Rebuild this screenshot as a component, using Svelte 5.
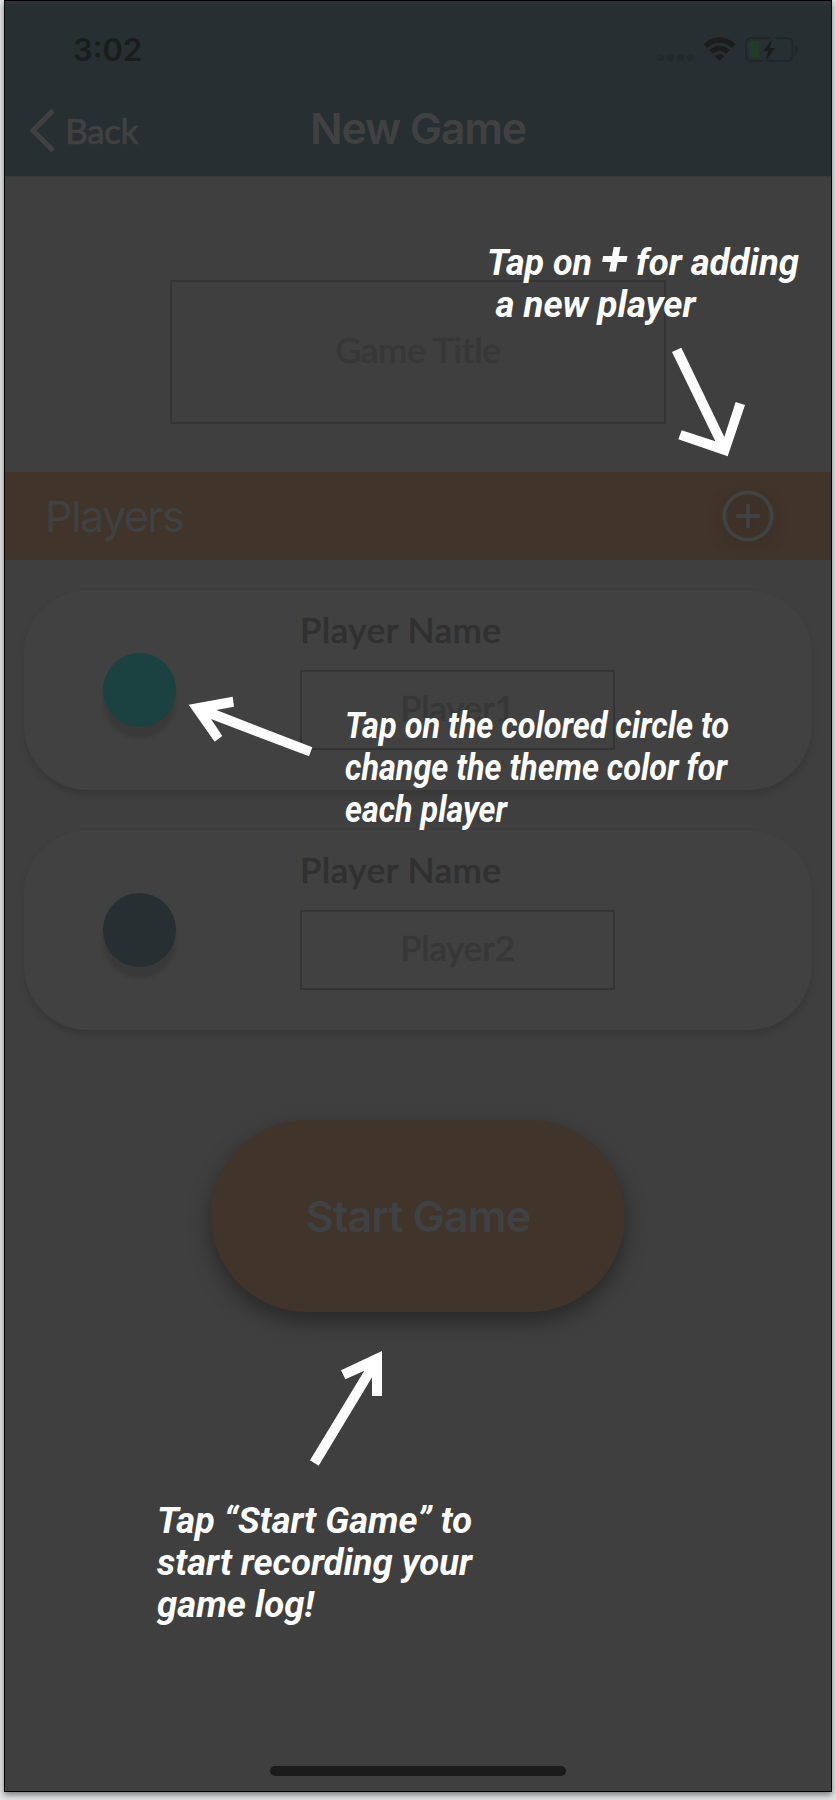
<script>
  const players = [
    { color: '#1b4141', placeholder: 'Player1' },
    { color: '#272f32', placeholder: 'Player2' }
  ];
  const notes = [
    { x: 487, y: 275, w: 105, text: 'Tap on' },
    { x: 636, y: 275, w: 163, text: 'for adding' },
    { x: 495.5, y: 317, w: 200, text: 'a new player' },
    { x: 345, y: 738, w: 384, text: 'Tap on the colored circle to' },
    { x: 345, y: 780, w: 382, text: 'change the theme color for' },
    { x: 345, y: 822, w: 162, text: 'each player' },
    { x: 157, y: 1532.7, w: 315, text: 'Tap “Start Game” to' },
    { x: 157, y: 1574.7, w: 315, text: 'start recording your' },
    { x: 157, y: 1616.7, w: 157, text: 'game log!' }
  ];
</script>

<div class="stage">
  <main class="phone">
    <header>
      <div class="status">
        <span class="time">3:02</span>
        <svg class="indicators" width="144" height="30" viewBox="656 34 144 30">
          <g fill="#24292c">
            <circle cx="660.5" cy="57.5" r="3.6" /><circle cx="670.5" cy="57.5" r="3.6" />
            <circle cx="680.5" cy="57.5" r="3.6" /><circle cx="690.5" cy="57.5" r="3.6" />
          </g>
          <g fill="#1b1c1c">
            <path d="M703.5 44.2Q719.5 30.2 735.5 44.2L732 48Q719.5 37.4 707 48Z" />
            <path d="M709.2 50Q719.5 41.4 729.8 50L726.3 53.5Q719.5 48 712.7 53.5Z" />
            <path d="M714.8 56.2Q719.5 52.2 724.2 56.2L719.5 61Z" />
            <path d="M772.2 39L763 51.2h5.4L765.5 61L775 48h-5.2Z" />
          </g>
          <path d="M771 38H752q-6 0-6 6v11q0 6 6 6h11M774.5 38H787q5.5 0 5.500 6v11q0 6-5.500 6H767" fill="none" stroke="#22272a" stroke-width="1.8" />
          <path d="M795 45.500q3 1 3 4t-3 4Z" fill="#22272a" />
          <path d="M751 41h8.500v17H751q-2 0-2-2V43q0-2 2-2Z" fill="#223a29" />
        </svg>
      </div>
      <div class="nav">
        <span class="back">
          <svg width="25" height="43" viewBox="0 0 25 43"><path d="M21.500 3L3 21.500L21.500 40" fill="none" stroke="#414141" stroke-width="5" stroke-linecap="round" stroke-linejoin="miter" /></svg>
          <span class="futura back-label">Back</span>
        </span>
        <h1>New Game</h1>
      </div>
    </header>

    <section class="title-area">
      <div class="field title-field"><span class="futura">Game Title</span></div>
    </section>

    <div class="players-bar">
      <h2>Players</h2>
      <svg class="add" width="52" height="52" viewBox="0 0 52 52">
        <circle cx="26" cy="26" r="23.700" />
        <path d="M26 15.500v21M15.500 26h21" />
      </svg>
    </div>

    <section class="cards">
      {#each players as p}
        <article class="card">
          <div class="swatch" style="background: {p.color}"></div>
          <div class="info">
            <div class="label"><span class="futura">Player Name</span></div>
            <div class="field name-field"><span class="futura">{p.placeholder}</span></div>
          </div>
        </article>
      {/each}
    </section>

    <div class="start">Start Game</div>
    <div class="home"></div>
  </main>

  <svg class="coach" width="836" height="1800" viewBox="0 0 836 1800" fill="#fff">
    {#each notes as n}
      <text x={n.x} y={n.y} textLength={n.w} lengthAdjust="spacingAndGlyphs">{n.text}</text>
    {/each}
    <text class="plus" x="601" y="275" textLength="27" lengthAdjust="spacingAndGlyphs">+</text>
    <g transform="translate(470 230) scale(.33333)"><polygon points="606,366 634,353 763,621 797,516 825,525 773,679 625,628 635,601 736,634" /></g>
    <g transform="translate(0 460) scale(.33333)"><polygon points="566,734 698,710 702,740 649,750 937,862 927,889 633,777 667,828 644,845" /></g>
    <g transform="translate(130 1330) scale(.33333)"><polygon points="756,63 756,198 726,198 726,142 566,407 540,391 703,122 646,148 633,121" /></g>
  </svg>
</div>

<style>
  :global(body) { background: #e3e4e5; }
  .stage { position: relative; width: 836px; height: 1800px; overflow: hidden; }
  .phone {
    box-sizing: border-box; width: 828px; height: 1792px; margin-left: 4px;
    border: 1px solid #000; background: #3f3f3f; display: flex; flex-direction: column;
    font-family: Inter, sans-serif; box-shadow: 0 3px 6px rgba(0, 0, 0, .45);
  }
  header { height: 175px; flex: none; background: linear-gradient(#2d3438, #272f32 8px); box-shadow: 0 1px 1px #393b3c; }
  .status { height: 97px; display: flex; justify-content: space-between; padding: 33px 31px 0 68px; box-sizing: border-box; }
  .time { font-size: 31px; line-height: 32px; font-weight: 600; color: #1b1c1c; }
  .indicators { display: block; }
  .nav { display: grid; grid-template-columns: 1fr auto 1fr; height: 60px; align-items: center; color: #414141; }
  .back { display: flex; align-items: center; padding: 4px 0 0 25px; gap: 10px; }
  .futura {
    display: inline-block; font-family: Lato, sans-serif; font-size: 35.500px; line-height: 42px;
    font-weight: 500; white-space: nowrap; -webkit-text-stroke: .5px currentColor;
  }
  .back-label { letter-spacing: -.7px; padding-top: 2px; }
  h1 { margin: 0; font-size: 43px; line-height: 52px; font-weight: 600; letter-spacing: -1.150px; }
  .title-area { height: 296px; flex: none; box-sizing: border-box; padding: 104px 0 0 165px; }
  .field { box-sizing: border-box; border: 2px solid #343434; display: flex; justify-content: center; align-items: center; color: #373737; }
  .field .futura { letter-spacing: -.4px; padding-bottom: 4px; }
  .title-field { width: 496px; height: 144px; }
  .players-bar {
    height: 88px; flex: none; background: #41342b; display: flex; align-items: center;
    justify-content: space-between; padding: 0 57px 0 40px;
  }
  h2 { margin: 0; font-size: 43px; line-height: 52px; font-weight: 400; color: #404142; letter-spacing: -1.500px; }
  .add { fill: none; stroke: #414244; stroke-width: 3.800; stroke-linecap: round; overflow: visible; filter: drop-shadow(0 4px 8px rgba(0, 0, 0, .22)); }
  .cards { display: flex; flex-direction: column; gap: 40px; padding: 30px 19px 0; }
  .card {
    box-sizing: border-box; height: 200px; border-radius: 64px; background: #414141;
    box-shadow: 0 5px 6px rgba(0, 0, 0, .13); display: flex; align-items: flex-start; padding-left: 79px;
  }
  .swatch { width: 73px; height: 74px; margin-top: 63px; border-radius: 50%; box-shadow: 0 11px 4px rgba(0, 0, 0, .12); }
  .info { margin-left: 124px; width: 315px; padding-top: 19px; }
  .label { height: 61px; color: #303030; letter-spacing: .35px; }
  .name-field { height: 80px; }
  .start {
    width: 414px; height: 192px; margin: 90px 0 0 206px; border-radius: 96px; flex: none;
    display: flex; align-items: center; justify-content: center; background: #41342b; color: #404142;
    font-size: 43px; font-weight: 600; letter-spacing: -.85px; box-shadow: 0 9px 22px rgba(0, 0, 0, .38);
  }
  .home { width: 296px; height: 10px; border-radius: 5px; background: #1b1b1b; margin: auto 0 15px 265px; }
  .coach { position: absolute; left: 0; top: 0; }
  .coach text { font-family: Roboto, sans-serif; font-size: 36px; font-weight: 700; font-style: italic; }
  .coach .plus { font-size: 48px; }
</style>
